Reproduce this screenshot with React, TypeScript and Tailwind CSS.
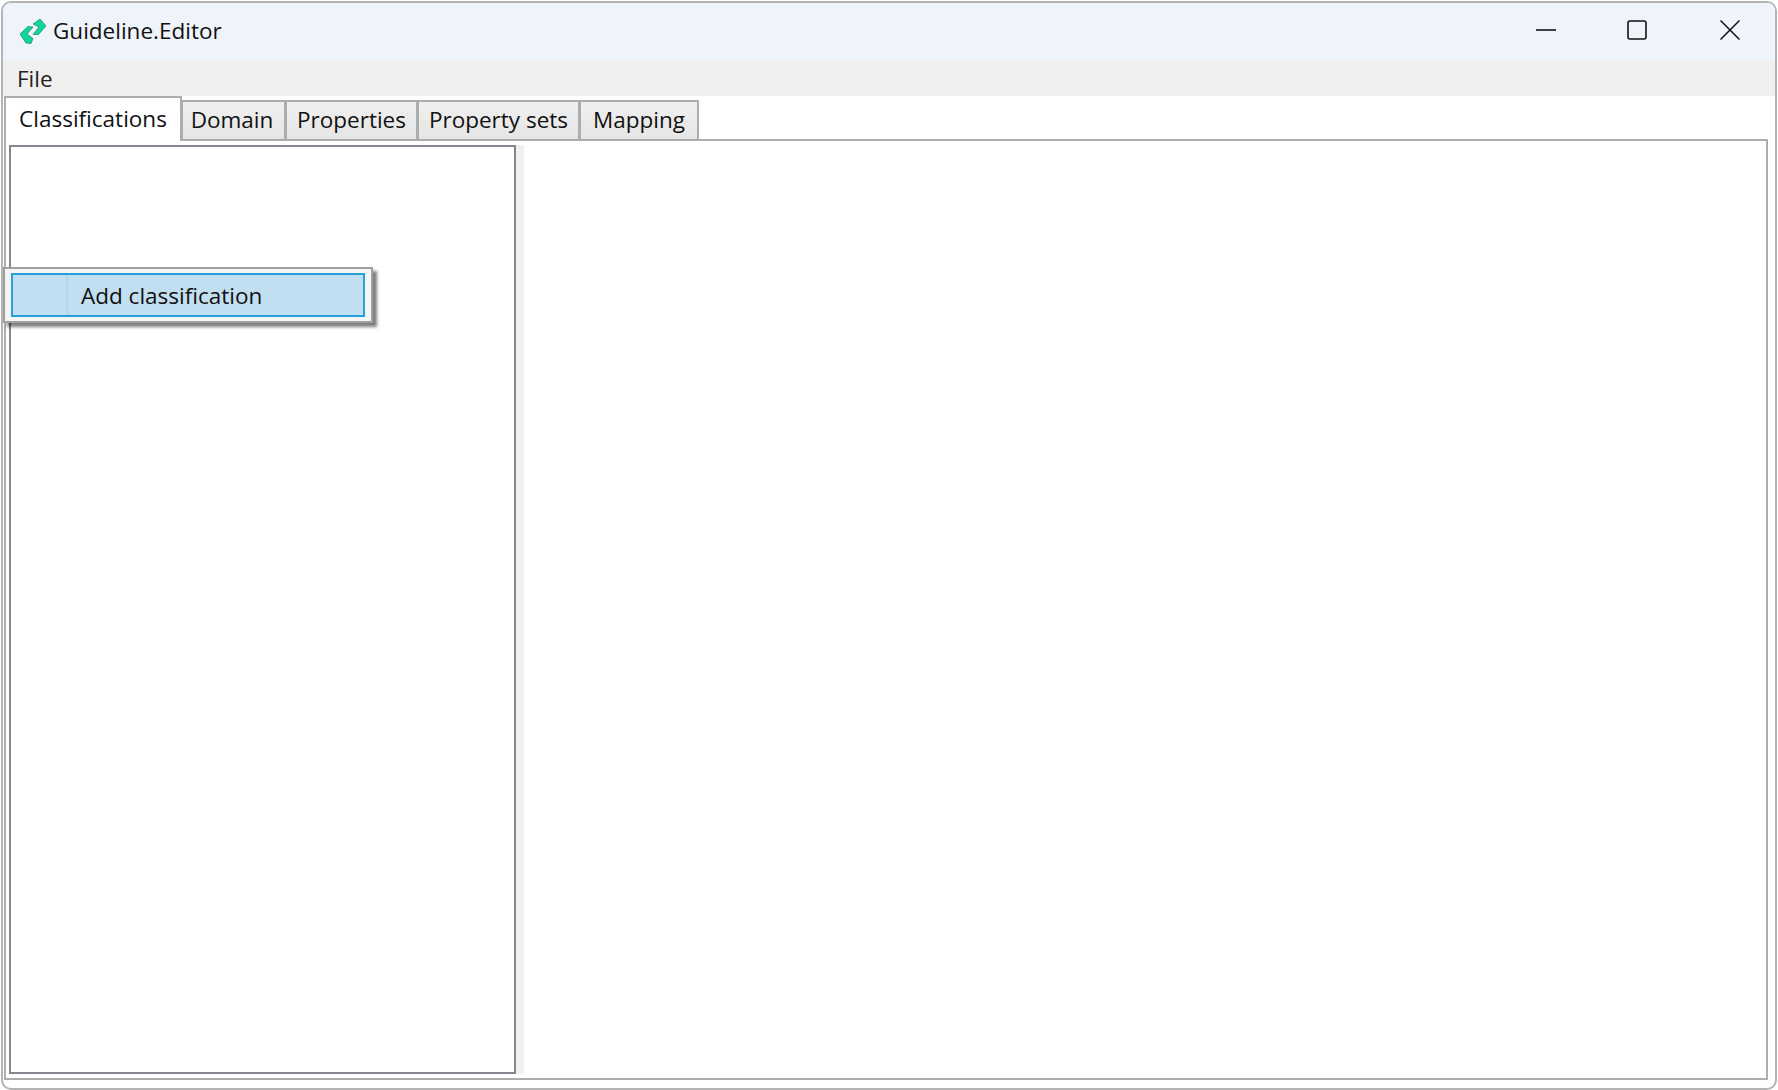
const font = { fontFamily: '"Open Sans", "Noto Sans", sans-serif' };

const tabs = ["Domain", "Properties", "Property sets", "Mapping"];

const tabWidths: Record<string, string> = {
  Domain: "w-[105px] pr-[3px]",
  Properties: "w-[133px]",
  "Property sets": "w-[163px]",
  Mapping: "w-[120px]",
};

function Logo() {
  return (
    <svg width="28" height="27" viewBox="0 0 28 27" className="shrink-0">
      <path d="M14 6 L21 1 L27 8 L19.5 16.5 L14 16.5 L20 9 Z" fill="#0fd69b" stroke="#0a7a5c" strokeWidth="0.6" />
      <path d="M1 16 L9 8.5 L14 9 L8 16 L14 20.5 L12 25.5 L7 25 Z" fill="#0fd69b" stroke="#0a7a5c" strokeWidth="0.6" />
    </svg>
  );
}

function TitleBar() {
  return (
    <div className="flex h-[57px] shrink-0 items-center justify-between rounded-t-[8px] bg-[#eff3fa]">
      <div className="flex items-center gap-[6px] pl-[16px]">
        <Logo />
        <span className="text-[22.5px] leading-none text-[#111]">Guideline.Editor</span>
      </div>
      <div className="flex items-center gap-[71px] pb-[4px] pr-[35px]">
        <svg width="20" height="20" viewBox="0 0 20 20">
          <path d="M0 10H20" stroke="#111" strokeWidth="1.6" />
        </svg>
        <svg width="20" height="20" viewBox="0 0 20 20">
          <rect x="1" y="1" width="18" height="18" rx="2" fill="none" stroke="#111" strokeWidth="1.6" />
        </svg>
        <div className="pl-[2px]">
          <svg width="20" height="20" viewBox="0 0 20 20">
            <path d="M0.5 0.5L19.5 19.5M19.5 0.5L0.5 19.5" stroke="#111" strokeWidth="1.5" />
          </svg>
        </div>
      </div>
    </div>
  );
}

export default function App() {
  return (
    <div className="relative h-[1090px] w-[1778px] overflow-hidden bg-white pl-[1px] pt-[1px] pr-[1px]" style={font}>
      <div className="flex h-full flex-col rounded-[10px] border-2 border-[#b4b4b4] bg-white">
        <TitleBar />

        {/* Menu */}
        <div className="flex h-[36px] shrink-0 items-center bg-[#f0f0f0] pl-[14px] pt-[2px] text-[22.5px] leading-none text-[#222]">
          File
        </div>

        {/* Tabs */}
        <div className="flex flex-1 flex-col pb-[8px] pl-[1px] pr-[7px]">
          <div className="relative z-10 -mb-[2px] flex h-[45px] shrink-0 items-end">
            <div className="flex h-[45px] w-[178px] items-start justify-center border-2 border-b-0 border-[#adadad] bg-white pt-[6px] text-[22.5px] leading-[30px] text-[#111]">
              Classifications
            </div>
            {tabs.map((t) => (
              <div
                key={t}
                className={`-ml-[1px] flex h-[41px] items-center justify-center border-2 border-[#adadad] bg-gradient-to-b from-[#f0f0f0] to-[#e5e5e5] text-[22.5px] leading-none text-[#111] ${tabWidths[t]}`}
              >
                {t}
              </div>
            ))}
          </div>

          <div className="flex min-h-0 flex-1 border-2 border-[#adadad] bg-white px-[3px] py-[4px]">
            <div className="w-[507px] shrink-0 border-2 border-[#828790] bg-white" />
            <div className="w-[8px] shrink-0 bg-[#f0f0f0]" />
            <div className="flex-1 bg-white" />
          </div>
        </div>
      </div>

      {/* Context menu */}
      <div className="absolute left-[3px] top-[267px] h-[56px] w-[370px] border-2 border-[#a0a0a0] bg-[#f5f5f5] px-[6px] py-[4px] shadow-[4px_4px_3px_rgba(0,0,0,0.5)]">
        <div className="flex h-full items-center border-2 border-[#26a0da] bg-[#c1dff0] pt-[2px] text-[22.5px] leading-none text-[#111]">
          <div className="-mt-[2px] h-[40px] w-[55px] shrink-0 border-r-2 border-[#b5d7ea]" />
          <span className="pl-[13px]">Add classification</span>
        </div>
      </div>
    </div>
  );
}
